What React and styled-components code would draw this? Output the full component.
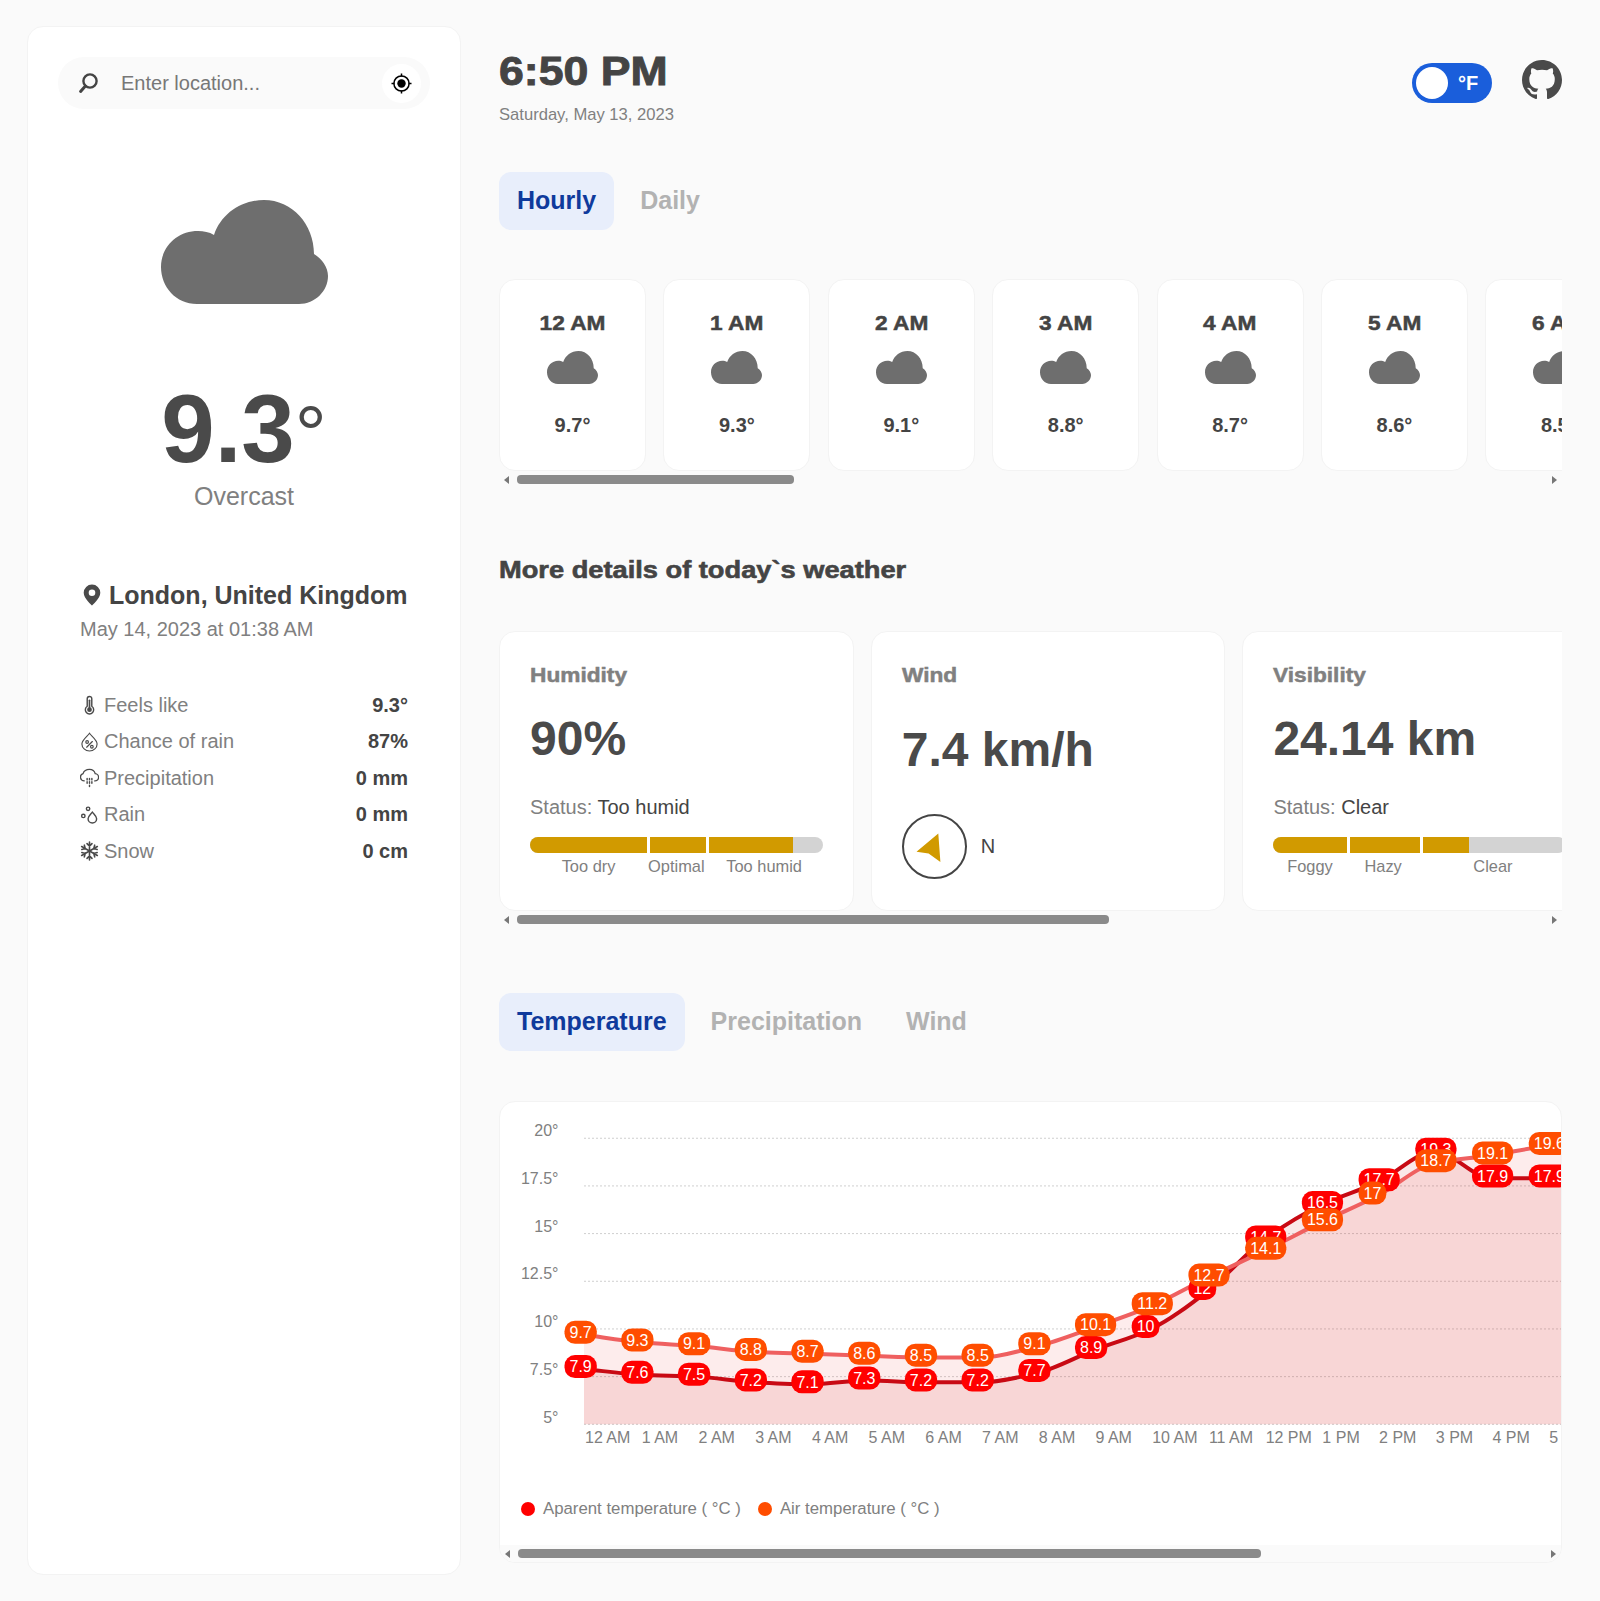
import React from "react";
import styled, { createGlobalStyle } from "styled-components";
import { BsGithub } from "react-icons/bs";

const Global = createGlobalStyle`
  * { box-sizing: border-box; }
  html, body { margin: 0; background: #fafafa; }
  body { font-family: "Liberation Sans", Arial, sans-serif; color: #444; }
`;

const Page = styled.div`
  display: grid;
  grid-template-columns: 434px 1063px;
  column-gap: 38px;
  padding: 26px 38px 26px 27px;
  height: 1601px;
  overflow: hidden;
`;

/* ---------- sidebar ---------- */
const Sidebar = styled.aside`
  background: #fff;
  border: 1px solid #f3f3f3;
  border-radius: 16px;
  padding: 30px;
  display: flex;
  flex-direction: column;
`;
const Search = styled.div`
  display: flex;
  align-items: center;
  height: 52px;
  background: #fafafa;
  border-radius: 26px;
  padding: 0 9px 0 20px;
  gap: 23px;
`;
const SearchInput = styled.input`
  flex: 1;
  min-width: 0;
  border: 0;
  outline: 0;
  background: transparent;
  font: 20px "Liberation Sans", Arial, sans-serif;
  padding: 0;
  &::placeholder { color: #777; opacity: 1; }
`;
const LocateButton = styled.button`
  width: 39px;
  height: 39px;
  border: 0;
  padding: 0;
  border-radius: 50%;
  background: #fff;
  display: flex;
  align-items: center;
  justify-content: center;
`;
const HeroIcon = styled.svg`
  display: block;
  width: 167px;
  height: 104px;
  margin: 91px auto 0;
  align-self: center;
`;
const TempValue = styled.div`
  margin-top: 75px;
  height: 100px;
  line-height: 100px;
  text-align: center;
  font-size: 96px;
  font-weight: 700;
  color: #4a4a4a;
`;
const TempDegree = styled.span`
  font-size: 80px;
  font-weight: 400;
  line-height: 0;
`;
const Condition = styled.div`
  margin-top: 2px;
  line-height: 30px;
  text-align: center;
  font-size: 25px;
  color: #808080;
`;
const Place = styled.div`
  margin-top: 68px;
  padding: 0 22px 0 25px;
  display: flex;
  align-items: center;
  gap: 8px;
  height: 32px;
  font-size: 25px;
  font-weight: 700;
  white-space: nowrap;
`;
const PlaceTime = styled.div`
  margin-top: 6px;
  padding: 0 22px;
  line-height: 24px;
  font-size: 20px;
  color: #808080;
`;
const Stats = styled.div`
  margin-top: 46px;
  padding: 0 22px;
`;
const StatRow = styled.div`
  display: flex;
  align-items: center;
  height: 36.5px;
  font-size: 20px;
`;
const StatLabel = styled.span`
  margin-left: 5px;
  color: #808080;
`;
const StatValue = styled.span`
  margin-left: auto;
  font-weight: 700;
`;
const StatIcon = styled.svg`
  width: 19px;
  height: 20px;
  flex: none;
  fill: none;
  stroke: #4a4a4a;
  stroke-width: 1.2;
  stroke-linecap: round;
`;

/* ---------- main column ---------- */
const Main = styled.main`
  min-width: 0;
  display: flex;
  flex-direction: column;
`;
const Header = styled.header`
  display: flex;
  justify-content: space-between;
  align-items: flex-start;
  height: 146px;
  padding-top: 21px;
`;
const Clock = styled.div`
  line-height: 48px;
  font-size: 40px;
  font-weight: 700;
  white-space: nowrap;
  transform: scaleX(1.115);
  transform-origin: left center;
  -webkit-text-stroke: 0.9px #444;
`;
const Today = styled.div`
  margin-top: 10px;
  line-height: 20px;
  font-size: 16.6px;
  color: #808080;
`;
const HeaderActions = styled.div`
  display: flex;
  align-items: flex-start;
  gap: 30px;
  padding-top: 17px;
  margin-top: -1px;
  svg { display: block; margin-top: -3px; color: #4a4a4a; }
`;
const Toggle = styled.div`
  width: 80px;
  height: 40px;
  border-radius: 20px;
  background: #1a5edb;
  display: flex;
  align-items: center;
  padding: 0 4px;
`;
const Knob = styled.span`
  width: 32px;
  height: 32px;
  border-radius: 50%;
  background: #fff;
`;
const ToggleText = styled.span`
  margin-left: 10px;
  color: #fff;
  font-size: 20px;
  font-weight: 700;
`;
const Tabs = styled.div`
  display: flex;
  gap: 8px;
  height: 58px;
`;
const Tab = styled.div`
  display: flex;
  align-items: center;
  padding: 0 18px 2px;
  border-radius: 12px;
  font-size: 25px;
  font-weight: 700;
  color: ${(p) => (p.$active ? "#0f3a9c" : "#b2b2b2")};
  background: ${(p) => (p.$active ? "#e8eefb" : "transparent")};
`;
const ScrollRow = styled.div`
  display: flex;
  overflow: hidden;
  gap: ${(p) => p.$gap}px;
`;
const HourRow = styled(ScrollRow)`
  margin-top: 49px;
`;
const HourCard = styled.div`
  flex: 0 0 147px;
  height: 192px;
  background: #fff;
  border: 1px solid #f3f3f3;
  border-radius: 16px;
  padding-top: 31px;
  display: flex;
  flex-direction: column;
  align-items: center;
`;
const HourLabel = styled.div`
  line-height: 24px;
  font-size: 21px;
  font-weight: 700;
  white-space: nowrap;
  transform: scaleX(1.08);
  -webkit-text-stroke: 0.5px #444;
`;
const HourIcon = styled.svg`
  width: 51px;
  height: 33px;
  margin-top: 16px;
  flex: none;
`;
const HourTemp = styled.div`
  margin-top: 29px;
  line-height: 24px;
  font-size: 20px;
  font-weight: 700;
`;
const ScrollTrack = styled.div`
  display: flex;
  align-items: center;
  flex: none;
  height: 17px;
  background: #fafafa;
  padding: 0 17px;
  position: relative;
`;
const Thumb = styled.div`
  height: 9px;
  border-radius: 4px;
  background: #8a8a8a;
  margin-left: 1px;
  width: ${(p) => p.$width}px;
`;
const Arrow = styled.span`
  position: absolute;
  top: 5px;
  ${(p) => (p.$right ? "right: 5px;" : "left: 5px;")}
  width: 0;
  height: 0;
  border-top: 4px solid transparent;
  border-bottom: 4px solid transparent;
  ${(p) => (p.$right ? "border-left: 5px solid #777;" : "border-right: 5px solid #777;")}
`;
const SectionTitle = styled.h2`
  margin: 67px 0 46px;
  line-height: 30px;
  font-size: 24px;
  font-weight: 700;
  white-space: nowrap;
  transform: scaleX(1.135);
  transform-origin: left center;
  -webkit-text-stroke: 0.6px #444;
`;
const DetailCard = styled.div`
  flex: 0 0 354.7px;
  height: 280px;
  background: #fff;
  border: 1px solid #f3f3f3;
  border-radius: 16px;
  padding: 31px 30px 0;
`;
const DetailTitle = styled.div`
  line-height: 24px;
  font-size: 21px;
  font-weight: 700;
  color: #808080;
  white-space: nowrap;
  transform: scaleX(1.08);
  transform-origin: left center;
  -webkit-text-stroke: 0.5px #808080;
`;
const DetailValue = styled.div`
  margin-top: ${(p) => p.$top}px;
  line-height: 56px;
  font-size: 48px;
  font-weight: 700;
  color: #4a4a4a;
`;
const Status = styled.div`
  margin-top: 28px;
  line-height: 24px;
  font-size: 20px;
  color: #808080;
  b { font-weight: 400; color: #444; }
`;
const Bar = styled.div`
  position: relative;
  display: flex;
  gap: 3px;
  height: 16px;
  margin-top: 18px;
  border-radius: 8px;
  overflow: hidden;
  background: #d3d3d3;
`;
const BarFill = styled.div`
  position: absolute;
  inset: 0 auto 0 0;
  background: #d19a00;
`;
const BarDivider = styled.div`
  position: absolute;
  top: 0;
  bottom: 0;
  width: 3px;
  background: #fff;
`;
const BarLabels = styled.div`
  display: flex;
  margin-top: 3px;
`;
const BarLabel = styled.div`
  text-align: center;
  line-height: 20px;
  font-size: 16.4px;
  color: #808080;
`;
const WindRow = styled.div`
  display: flex;
  align-items: center;
  gap: 14px;
  margin-top: 36px;
  font-size: 20px;
`;
const Compass = styled.div`
  width: 65px;
  height: 65px;
  border: 2px solid #444;
  border-radius: 50%;
  display: flex;
  align-items: center;
  justify-content: center;
`;
const ChartTabs = styled(Tabs)`
  margin-top: 65px;
`;
const ChartCard = styled.div`
  margin-top: 50px;
  height: 462px;
  background: #fff;
  border: 1px solid #f3f3f3;
  border-radius: 16px;
  overflow: hidden;
  display: flex;
  flex-direction: column;
`;
const ChartSvg = styled.svg`
  display: block;
  flex: none;
  font-family: "Liberation Sans", Arial, sans-serif;
`;
const Legend = styled.div`
  display: flex;
  align-items: center;
  height: 20px;
  margin-top: 26px;
  padding-left: 21px;
  font-size: 16.8px;
  color: #808080;
`;
const LegendDot = styled.span`
  width: 14px;
  height: 14px;
  border-radius: 50%;
  background: ${(p) => p.$color};
  margin-right: 8px;
`;
const LegendText = styled.span`
  margin-right: 17px;
`;
const ChartScroll = styled(ScrollTrack)`
  margin-top: auto;
`;

/* ---------- drawings ---------- */
const CLOUD =
  "M36 104C15 104 0 87 0 67C0 47 16 31 37 31C43 31 48 32 53 35C60 14 80 0 103 0C131 0 153 24 153 54C161 59 167 67 167 76C167 91 154 104 138 104Z";

const SearchGlyph = () => (
  <svg width="20" height="22" viewBox="0 0 20 22" style={{ flex: "none" }}>
    <circle cx="12" cy="9" r="6.6" fill="none" stroke="#444" strokeWidth="2.4" />
    <path d="M7.4 14L2.6 19.4" stroke="#444" strokeWidth="3" strokeLinecap="round" />
  </svg>
);
const LocateGlyph = () => (
  <svg width="21" height="21" viewBox="0 0 21 21">
    <circle cx="10.5" cy="10.5" r="7.6" fill="none" stroke="#000" strokeWidth="1.5" />
    <circle cx="10.5" cy="10.5" r="4.2" fill="#000" />
    <path d="M10.5 .5v3M10.5 17.5v3M.5 10.5h3M17.5 10.5h3" stroke="#000" strokeWidth="1.5" />
  </svg>
);
const PinGlyph = () => (
  <svg width="18" height="22" viewBox="0 0 18 22" style={{ flex: "none" }}>
    <path
      fillRule="evenodd"
      fill="#4a4a4a"
      d="M9 .5A8.3 8.3 0 0 0 .7 8.8C.7 14.6 9 21.5 9 21.5s8.3-6.9 8.3-12.7A8.3 8.3 0 0 0 9 .5zM9 12a3.3 3.3 0 1 1 0-6.6A3.3 3.3 0 0 1 9 12z"
    />
  </svg>
);
const ThermoGlyph = () => (
  <StatIcon viewBox="0 0 20 20">
    <path d="M7.6 3.4a2.4 2.4 0 0 1 4.8 0v7.9a4.4 4.4 0 1 1-4.8 0z" strokeWidth="1.5" />
    <circle cx="10" cy="14.9" r="2.5" fill="#4a4a4a" stroke="none" />
    <path d="M10 14V5" strokeWidth="1.8" />
  </StatIcon>
);
const DropPercentGlyph = () => (
  <StatIcon viewBox="0 0 20 20">
    <path d="M10 .8C8 3.8 2 7.8 2 12a8 7.5 0 0 0 16 0C18 7.800 12 3.800 10 .8z" />
    <path d="M7 15.500L13 9.500" />
    <circle cx="7.500" cy="10" r="1.400" />
    <circle cx="12.500" cy="15" r="1.400" />
  </StatIcon>
);
const RainCloudGlyph = () => (
  <StatIcon viewBox="0 0 20 20">
    <path d="M4.500 13A3.900 3.900 0 0 1 3.200 5.400C4.200 2.500 7 1 10 1c3 0 5.300 1.800 6 4.400a3.800 3.800 0 0 1-.5 7.600" strokeWidth="1.400" />
    <path d="M7.500 10.500v1.500M10 10.500v1.500M12.500 10.500v1.500M7.500 14v1.500M10 14v1.500M12.500 14v1.500M10 17.500v1.500" strokeWidth="1.500" />
  </StatIcon>
);
const DropsGlyph = () => (
  <StatIcon viewBox="0 0 20 20">
    <path d="M13 7c-1.500 2.200-4.500 4.200-4.500 7a4.500 4.500 0 0 0 9 0c0-2.800-3-4.800-4.500-7z" strokeWidth="1.500" />
    <circle cx="3.500" cy="11" r="1.800" strokeWidth="1.500" />
    <circle cx="8.500" cy="3.500" r="1.800" strokeWidth="1.500" />
  </StatIcon>
);
const SnowGlyph = () => (
  <StatIcon viewBox="0 0 20 20">
    {[0, 60, 120].map((r) => (
      <g key={r} transform={`rotate(${r} 10 10)`}>
        <path d="M10 .5v19M7.400 2.200L10 4.800l2.600-2.600M7.400 17.800L10 15.200l2.600 2.600" strokeWidth="1.700" />
      </g>
    ))}
  </StatIcon>
);

/* ---------- data ---------- */
const STATS = [
  [ThermoGlyph, "Feels like", "9.3°"],
  [DropPercentGlyph, "Chance of rain", "87%"],
  [RainCloudGlyph, "Precipitation", "0 mm"],
  [DropsGlyph, "Rain", "0 mm"],
  [SnowGlyph, "Snow", "0 cm"],
];
const HOURS = [
  ["12 AM", "9.7°"],
  ["1 AM", "9.3°"],
  ["2 AM", "9.1°"],
  ["3 AM", "8.8°"],
  ["4 AM", "8.7°"],
  ["5 AM", "8.6°"],
  ["6 AM", "8.5°"],
];
const AIR = [9.7, 9.3, 9.1, 8.8, 8.7, 8.6, 8.5, 8.5, 9.1, 10.1, 11.2, 12.7, 14.1, 15.6, 17, 18.7, 19.1, 19.6, 19.8];
const APPARENT = [7.9, 7.6, 7.5, 7.2, 7.1, 7.3, 7.2, 7.2, 7.7, 8.9, 10, 12, 14.7, 16.5, 17.7, 19.3, 17.9, 17.9, 17.9];
const XLABELS = ["12 AM", "1 AM", "2 AM", "3 AM", "4 AM", "5 AM", "6 AM", "7 AM", "8 AM", "9 AM", "10 AM", "11 AM", "12 PM", "1 PM", "2 PM", "3 PM", "4 PM", "5 PM"];
const YTICKS = [20, 17.5, 15, 12.5, 10, 7.5, 5];

const X0 = 584;
const DX = 56.72;
const BASE = 1424.3;
const px = (i) => X0 + DX * i;
const py = (v) => BASE - (v - 5) * 19.07;

function monotone(values) {
  const pts = values.map((v, i) => [px(i), py(v)]);
  const n = pts.length;
  const slopes = [];
  for (let i = 0; i < n - 1; i++) slopes.push((pts[i + 1][1] - pts[i][1]) / DX);
  const t = pts.map((_, i) => {
    if (i === 0) return slopes[0];
    if (i === n - 1) return slopes[n - 2];
    const a = slopes[i - 1];
    const b = slopes[i];
    if (a * b <= 0) return 0;
    return (2 * a * b) / (a + b);
  });
  let d = `M${pts[0][0]} ${pts[0][1]}`;
  for (let i = 0; i < n - 1; i++) {
    const c = DX / 3;
    d += `C${pts[i][0] + c} ${pts[i][1] + t[i] * c} ${pts[i + 1][0] - c} ${pts[i + 1][1] - t[i + 1] * c} ${pts[i + 1][0]} ${pts[i + 1][1]}`;
  }
  return d;
}
const area = (values) => `${monotone(values)}L${px(values.length - 1)} ${BASE}L${X0} ${BASE}Z`;

const Pills = ({ values, color }) =>
  values.map((v, i) => {
    const text = String(v);
    const w = text.length * 8.9 - (text.includes(".") ? 4.4 : 0) + 10;
    const left = px(i) - 19.5;
    const cy = py(v) - 2.4;
    return (
      <g key={i}>
        <rect x={left} y={cy - 11.5} width={w} height={23} rx="10.5" fill={color} />
        <text x={left + w / 2} y={cy + 5.7} textAnchor="middle" fontSize="16" fill="#fff">
          {text}
        </text>
      </g>
    );
  });

const TempChart = () => (
  <ChartSvg width="1061" height="371" viewBox="500 1102 1061 371">
    {YTICKS.map((t) => (
      <g key={t}>
        <line x1={X0} x2="1561" y1={py(t)} y2={py(t)} stroke="#cfcfcf" strokeWidth="1" strokeDasharray="2 2" />
        <text x="558.500" y={py(t) - 1.800} textAnchor="end" fontSize="16" fill="#808080">
          {t}°
        </text>
      </g>
    ))}
    <path d={area(AIR)} fill="rgba(235,65,65,.1)" />
    <path d={area(APPARENT)} fill="rgba(200,0,0,.09)" />
    <path d={monotone(APPARENT)} fill="none" stroke="#c80a14" strokeWidth="4" />
    <path d={monotone(AIR)} fill="none" stroke="#ef6060" strokeWidth="4" />
    <Pills values={APPARENT} color="#ff0000" />
    <Pills values={AIR} color="#ff4d00" />
    {XLABELS.map((l, i) => (
      <text key={l} x={X0 + 1 + DX * i} y="1443" fontSize="16" fill="#808080">
        {l}
      </text>
    ))}
  </ChartSvg>
);

const Scrollbar = ({ width, as: Track = ScrollTrack }) => (
  <Track>
    <Arrow />
    <Thumb $width={width} />
    <Arrow $right />
  </Track>
);

const MeterBar = ({ percent, stops, labels }) => {
  const widths = stops.map((s, i) => s - (i ? stops[i - 1] : 0));
  return (
    <>
      <Bar>
        <BarFill style={{ width: `${percent}%` }} />
        {stops.slice(0, -1).map((s) => (
          <BarDivider key={s} style={{ left: `${s}%` }} />
        ))}
      </Bar>
      <BarLabels>
        {labels.map((l, i) => (
          <BarLabel key={l} style={{ width: `${widths[i]}%` }}>
            {l}
          </BarLabel>
        ))}
      </BarLabels>
    </>
  );
};

export default function App() {
  return (
    <>
      <Global />
      <Page>
        <Sidebar>
          <Search>
            <SearchGlyph />
            <SearchInput placeholder="Enter location..." />
            <LocateButton aria-label="Use my location">
              <LocateGlyph />
            </LocateButton>
          </Search>
          <HeroIcon viewBox="0 0 167 104">
            <path d={CLOUD} fill="#6e6e6e" />
          </HeroIcon>
          <TempValue>
            9.3<TempDegree>°</TempDegree>
          </TempValue>
          <Condition>Overcast</Condition>
          <Place>
            <PinGlyph />
            London, United Kingdom
          </Place>
          <PlaceTime>May 14, 2023 at 01:38 AM</PlaceTime>
          <Stats>
            {STATS.map(([Icon, label, value]) => (
              <StatRow key={label}>
                <Icon />
                <StatLabel>{label}</StatLabel>
                <StatValue>{value}</StatValue>
              </StatRow>
            ))}
          </Stats>
        </Sidebar>

        <Main>
          <Header>
            <div>
              <Clock>6:50 PM</Clock>
              <Today>Saturday, May 13, 2023</Today>
            </div>
            <HeaderActions>
              <Toggle>
                <Knob />
                <ToggleText>°F</ToggleText>
              </Toggle>
              <BsGithub size={40} />
            </HeaderActions>
          </Header>

          <Tabs>
            <Tab $active>Hourly</Tab>
            <Tab>Daily</Tab>
          </Tabs>

          <HourRow $gap={17.4}>
            {HOURS.map(([h, t]) => (
              <HourCard key={h}>
                <HourLabel>{h}</HourLabel>
                <HourIcon viewBox="0 0 167 104" preserveAspectRatio="none">
                  <path d={CLOUD} fill="#6e6e6e" />
                </HourIcon>
                <HourTemp>{t}</HourTemp>
              </HourCard>
            ))}
          </HourRow>
          <Scrollbar width={277} />

          <SectionTitle>More details of today`s weather</SectionTitle>

          <ScrollRow $gap={17}>
            <DetailCard>
              <DetailTitle>Humidity</DetailTitle>
              <DetailValue $top={24}>90%</DetailValue>
              <Status>
                Status: <b>Too humid</b>
              </Status>
              <MeterBar percent={90} stops={[40, 60, 100]} labels={["Too dry", "Optimal", "Too humid"]} />
            </DetailCard>
            <DetailCard>
              <DetailTitle>Wind</DetailTitle>
              <DetailValue $top={35}>7.4 km/h</DetailValue>
              <WindRow>
                <Compass>
                  <svg width="40" height="40" viewBox="0 0 40 40">
                    <path d="M24.300 6.500L26.400 35L14.600 26.500L2.500 24.700Z" fill="#d19a00" />
                  </svg>
                </Compass>
                N
              </WindRow>
            </DetailCard>
            <DetailCard>
              <DetailTitle>Visibility</DetailTitle>
              <DetailValue $top={24}>24.14 km</DetailValue>
              <Status>
                Status: <b>Clear</b>
              </Status>
              <MeterBar percent={67} stops={[25, 50, 100]} labels={["Foggy", "Hazy", "Clear"]} />
            </DetailCard>
          </ScrollRow>
          <Scrollbar width={592} />

          <ChartTabs>
            <Tab $active>Temperature</Tab>
            <Tab>Precipitation</Tab>
            <Tab>Wind</Tab>
          </ChartTabs>

          <ChartCard>
            <TempChart />
            <Legend>
              <LegendDot $color="#ff0000" />
              <LegendText>Aparent temperature ( °C )</LegendText>
              <LegendDot $color="#ff4d00" />
              <LegendText>Air temperature ( °C )</LegendText>
            </Legend>
            <Scrollbar width={743} as={ChartScroll} />
          </ChartCard>
        </Main>
      </Page>
    </>
  );
}
